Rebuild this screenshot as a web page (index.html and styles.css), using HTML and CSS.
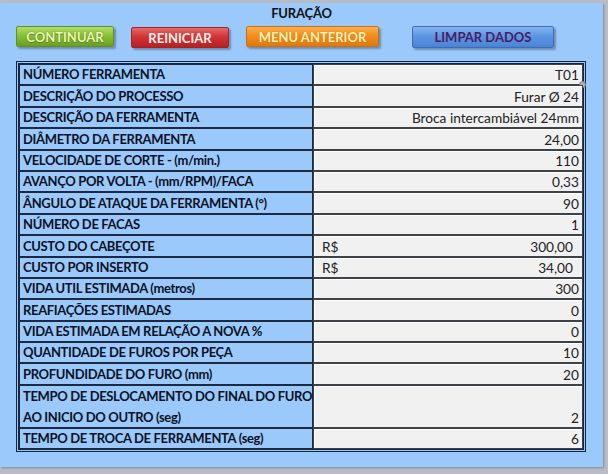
FILE: index.html
```html
<!DOCTYPE html>
<html lang="pt">
<head>
<meta charset="utf-8">
<title>Furação</title>
<link rel="stylesheet" href="styles.css">
</head>
<body>
<div class="panel">
  <div class="title">FURAÇÃO</div>
  <div class="buttons">
    <div class="btn btn-green">CONTINUAR</div>
    <div class="btn btn-red">REINICIAR</div>
    <div class="btn btn-orange">MENU ANTERIOR</div>
    <div class="btn btn-blue">LIMPAR DADOS</div>
  </div>
  <div class="table-wrap">
    <div class="grid">
      <div class="lbl">NÚMERO FERRAMENTA</div><div class="val">T01<span class="handle"></span></div>
      <div class="lbl">DESCRIÇÃO DO PROCESSO</div><div class="val">Furar Ø 24</div>
      <div class="lbl">DESCRIÇÃO DA FERRAMENTA</div><div class="val">Broca intercambiável 24mm</div>
      <div class="lbl">DIÂMETRO DA FERRAMENTA</div><div class="val">24,00</div>
      <div class="lbl">VELOCIDADE DE CORTE - (m/min.)</div><div class="val">110</div>
      <div class="lbl">AVANÇO POR VOLTA - (mm/RPM)/FACA</div><div class="val">0,33</div>
      <div class="lbl">ÂNGULO DE ATAQUE DA FERRAMENTA (°)</div><div class="val">90</div>
      <div class="lbl">NÚMERO DE FACAS</div><div class="val">1</div>
      <div class="lbl">CUSTO DO CABEÇOTE</div><div class="val money"><span>R$</span><span>300,00</span></div>
      <div class="lbl">CUSTO POR INSERTO</div><div class="val money"><span>R$</span><span>34,00</span></div>
      <div class="lbl">VIDA UTIL ESTIMADA (metros)</div><div class="val">300</div>
      <div class="lbl">REAFIAÇÕES ESTIMADAS</div><div class="val">0</div>
      <div class="lbl">VIDA ESTIMADA EM RELAÇÃO A NOVA %</div><div class="val">0</div>
      <div class="lbl">QUANTIDADE DE FUROS POR PEÇA</div><div class="val">10</div>
      <div class="lbl">PROFUNDIDADE DO FURO (mm)</div><div class="val">20</div>
      <div class="lbl lbl-double">TEMPO DE DESLOCAMENTO DO FINAL DO FURO<br>AO INICIO DO OUTRO (seg)</div><div class="val">2</div>
      <div class="lbl">TEMPO DE TROCA DE FERRAMENTA (seg)</div><div class="val">6</div>
    </div>
  </div>
</div>
</body>
</html>
```
FILE: styles.css
```css
html, body {
  margin: 0;
  padding: 0;
}
body {
  width: 608px;
  height: 474px;
  overflow: hidden;
  background: #b9bec6;
  font-family: Lato, "Liberation Sans", sans-serif;
}
.panel {
  margin-top: 3px;
  width: 603px;
  height: 464px;
  background: #9bc9fb;
  box-shadow: 1px 1px 2px rgba(90, 100, 115, 0.6);
  overflow: hidden;
}
.title {
  text-align: center;
  font-weight: bold;
  font-size: 13px;
  line-height: 16px;
  height: 16px;
  padding-top: 2px;
  color: #111;
  letter-spacing: -0.2px;
}
.buttons {
  display: flex;
  gap: 17px;
  padding-left: 16px;
  margin-top: 5px;
  height: 23px;
}
.btn {
  height: 21px;
  box-sizing: border-box;
  display: flex;
  align-items: center;
  justify-content: center;
  font-weight: bold;
  font-size: 13px;
  border-radius: 2px;
  box-shadow: 2px 2px 2px rgba(60, 70, 90, 0.45);
}
.btn-green {
  width: 98px;
  background: linear-gradient(#b2de68, #86c236 45%, #6a9e20);
  border: 1px solid #648f26;
  color: #eef6b4;
  text-shadow: 0 0 1px #4c7216, 0 1px 0 #5a861a;
}
.btn-red {
  width: 98px;
  margin-top: 1px;
  background: linear-gradient(#e66a6a, #d23434 45%, #b82020);
  border: 1px solid #a02424;
  color: #fff3f0;
}
.btn-orange {
  width: 133px;
  background: linear-gradient(#fab050, #f48e1c 45%, #e0780c);
  border: 1px solid #c87014;
  color: #fff4b8;
  text-shadow: 0 0 1px #b86408;
}
.btn-blue {
  width: 142px;
  height: 22px;
  margin-left: 16px;
  background: linear-gradient(#86b6f0, #5c96e2 45%, #4a84d4);
  border: 1px solid #3c6eb8;
  color: #4a1c66;
}
.table-wrap {
  margin-left: 16px;
  margin-top: 12px;
  width: 570px;
  box-sizing: border-box;
  border: 1px solid #16243e;
  padding: 1px;
}
.grid {
  display: grid;
  grid-template-columns: 294px 1fr;
  grid-template-rows: repeat(15, 21.4px) 42.7px 21.4px;
  border: 1px solid #16243e;
}
.lbl, .val {
  box-sizing: border-box;
  display: flex;
  align-items: flex-end;
  line-height: 19px;
  white-space: nowrap;
}
.lbl {
  background: #9bc9fb;
  border: 1px solid #1b2942;
  font-weight: bold;
  font-size: 13px;
  letter-spacing: -0.35px;
  color: #0b1224;
  padding: 0 0 0 3px;
}
.lbl-double {
  display: block;
  line-height: 21px;
}
.val {
  position: relative;
  background: #f1f1f1;
  border: 1px solid #3e4146;
  box-shadow: inset 1px 1px 0 #ffffff;
  justify-content: flex-end;
  font-size: 13.7px;
  color: #222;
  padding: 0 3px 0 0;
}
.money {
  justify-content: space-between;
  padding: 0 9px 0 8px;
}
.handle {
  position: absolute;
  right: -4px;
  bottom: -4px;
  width: 5px;
  height: 5px;
  border-radius: 50%;
  background: #b0b0b0;
  border: 1px solid #808080;
}
```
